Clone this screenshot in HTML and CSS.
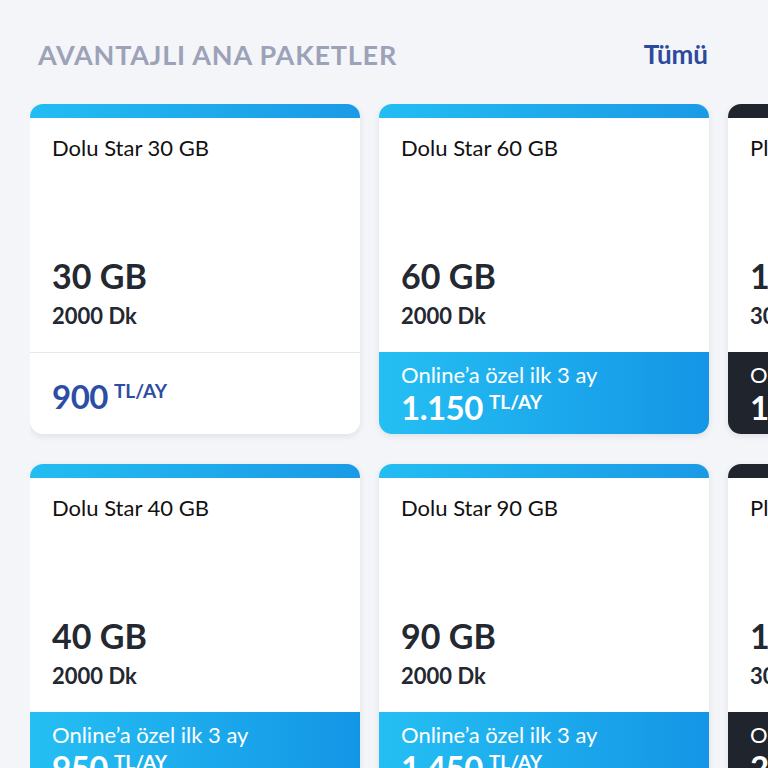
FILE: index.html
```html
<!DOCTYPE html>
<html lang="tr">
<head>
<meta charset="utf-8">
<title>Avantajlı Ana Paketler</title>
<link rel="stylesheet" href="styles.css">
</head>
<body>
<section class="packages">
  <header class="packages-head">
    <h2 class="packages-title">AVANTAJLI ANA PAKETLER</h2>
    <a class="packages-all" href="#">Tümü</a>
  </header>
  <div class="packages-scroll">
  <div class="packages-grid">
    <article class="card">
      <div class="card-stripe"></div>
      <div class="card-body">
        <div class="card-name">Dolu Star 30 GB</div>
        <div class="card-gb">30 GB</div>
        <div class="card-min">2000 Dk</div>
      </div>
      <div class="card-foot plain">
        <div class="price"><span class="price-num">900</span><span class="price-unit">TL/AY</span></div>
      </div>
    </article>
    <article class="card">
      <div class="card-stripe"></div>
      <div class="card-body">
        <div class="card-name">Dolu Star 60 GB</div>
        <div class="card-gb">60 GB</div>
        <div class="card-min">2000 Dk</div>
      </div>
      <div class="card-foot promo">
        <div class="promo-text">Online’a özel ilk 3 ay</div>
        <div class="price"><span class="price-num">1.150</span><span class="price-unit">TL/AY</span></div>
      </div>
    </article>
    <article class="card dark">
      <div class="card-stripe"></div>
      <div class="card-body">
        <div class="card-name">Platinum 120 GB</div>
        <div class="card-gb">120 GB</div>
        <div class="card-min">3000 Dk</div>
      </div>
      <div class="card-foot promo">
        <div class="promo-text">Online’a özel ilk 3 ay</div>
        <div class="price"><span class="price-num">1.750</span><span class="price-unit">TL/AY</span></div>
      </div>
    </article>
    <article class="card">
      <div class="card-stripe"></div>
      <div class="card-body">
        <div class="card-name">Dolu Star 40 GB</div>
        <div class="card-gb">40 GB</div>
        <div class="card-min">2000 Dk</div>
      </div>
      <div class="card-foot promo">
        <div class="promo-text">Online’a özel ilk 3 ay</div>
        <div class="price"><span class="price-num">950</span><span class="price-unit">TL/AY</span></div>
      </div>
    </article>
    <article class="card">
      <div class="card-stripe"></div>
      <div class="card-body">
        <div class="card-name">Dolu Star 90 GB</div>
        <div class="card-gb">90 GB</div>
        <div class="card-min">2000 Dk</div>
      </div>
      <div class="card-foot promo">
        <div class="promo-text">Online’a özel ilk 3 ay</div>
        <div class="price"><span class="price-num">1.450</span><span class="price-unit">TL/AY</span></div>
      </div>
    </article>
    <article class="card dark">
      <div class="card-stripe"></div>
      <div class="card-body">
        <div class="card-name">Platinum 160 GB</div>
        <div class="card-gb">160 GB</div>
        <div class="card-min">3000 Dk</div>
      </div>
      <div class="card-foot promo">
        <div class="promo-text">Online’a özel ilk 3 ay</div>
        <div class="price"><span class="price-num">2.150</span><span class="price-unit">TL/AY</span></div>
      </div>
    </article>
  </div>
  </div>
</section>
</body>
</html>
```
FILE: styles.css
```css
* { box-sizing: border-box; }
html, body { margin: 0; padding: 0; }
body {
  background: #f4f5f8;
  font-family: Lato, "Noto Sans", "Liberation Sans", sans-serif;
  color: #232831;
  width: 768px;
  height: 768px;
  overflow: hidden;
}
.packages { padding: 36px 0 0 30px; }
.packages-head {
  display: flex;
  align-items: center;
  justify-content: space-between;
  padding: 0 60px 0 8px;
  height: 36px;
  margin-bottom: 32px;
}
.packages-title {
  margin: 0;
  font-size: 27px;
  font-weight: 700;
  letter-spacing: 0.8px;
  color: #9ca2b8;
}
.packages-all {
  font-size: 26px;
  font-weight: 700;
  color: #2b4a9e;
  text-decoration: none;
}
.packages-scroll {
  width: 738px;
  overflow: hidden;
  padding-bottom: 8px;
}
.packages-grid {
  display: grid;
  grid-template-columns: repeat(3, 330px);
  grid-auto-rows: 330px;
  column-gap: 19px;
  row-gap: 30px;
}
.card {
  display: flex;
  flex-direction: column;
  background: #fff;
  border-radius: 13px;
  overflow: hidden;
  box-shadow: 0 2px 6px rgba(30, 40, 70, 0.10);
}
.card-stripe {
  height: 14px;
  flex: none;
  background: linear-gradient(90deg, #23bdf2 0%, #1a9ae6 100%);
}
.card.dark .card-stripe { background: #1f242d; }
.card-body {
  flex: 1;
  display: flex;
  flex-direction: column;
  padding: 16px 22px 0 22px;
}
.card-name {
  font-size: 22px;
  font-weight: 400;
  color: #111;
  line-height: 28px;
}
.card-gb {
  margin-top: auto;
  font-size: 34px;
  font-weight: 700;
  line-height: 40px;
  color: #232831;
}
.card-min {
  font-size: 22px;
  font-weight: 700;
  line-height: 28px;
  margin-top: 6px;
  margin-bottom: 22px;
  color: #232831;
}
.card-foot {
  height: 82px;
  flex: none;
  padding: 0 22px;
}
.card-foot.plain {
  border-top: 1.5px solid #e6e8ee;
  display: flex;
  align-items: center;
}
.card-foot.promo {
  background: linear-gradient(90deg, #25bff3 0%, #1496e6 100%);
  color: #fff;
  padding-top: 9px;
}
.card.dark .card-foot.promo { background: #1f242d; }
.promo-text {
  font-size: 22px;
  font-weight: 400;
  line-height: 28px;
}
.price {
  display: flex;
  align-items: flex-start;
  line-height: 36px;
}
.price-num {
  font-size: 33px;
  font-weight: 700;
  letter-spacing: -0.5px;
}
.price-unit {
  font-size: 19px;
  font-weight: 700;
  line-height: 18px;
  margin-left: 6px;
  margin-top: 4px;
}
.card-foot.plain .price { color: #2b4da6; margin-top: 4px; }
```
